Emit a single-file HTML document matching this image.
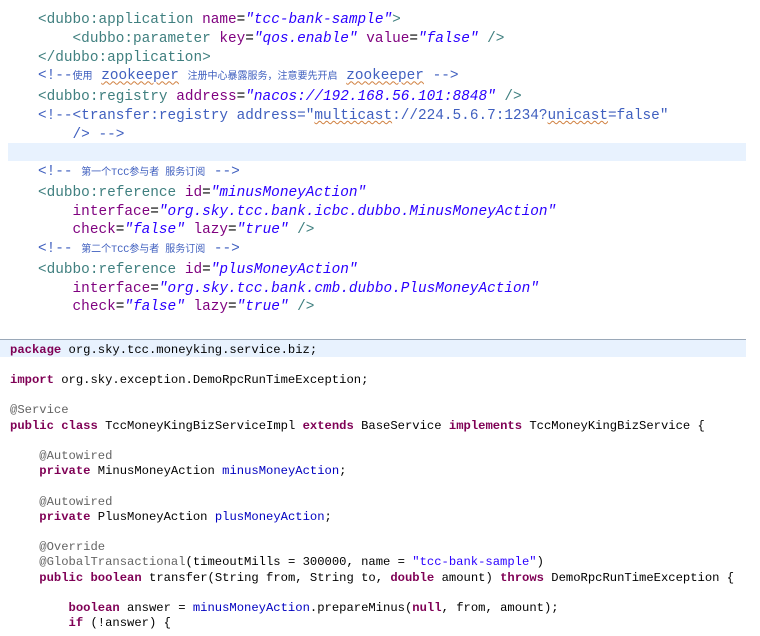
<!DOCTYPE html><html><head><meta charset="utf-8"><style>
body{margin:0;width:760px;height:636px;background:#fff;position:relative;overflow:hidden}
pre{margin:0;position:absolute;white-space:pre}
.x{left:38px;top:11px;font:14.4px/18.75px "Liberation Mono","Noto Sans CJK SC",monospace;color:#3f7f7f}
.j{left:10px;top:342.5px;font:12.2px/15.2px "Liberation Mono",monospace;color:#000}
.a{color:#7f007f}.v{color:#2a00ff;font-style:italic}.c{color:#3f5fbf}.c small{font-size:10px}
.k{color:#7f0055;font-weight:bold}.f{color:#0000c0}.n{color:#646464}.s{color:#2a00ff}
.u{text-decoration:underline wavy #d08040;text-decoration-thickness:1px}
.e{color:#000}
</style></head><body>
<div style="position:absolute;left:8px;top:143px;width:738px;height:18px;background:#e8f2fe"></div>
<div style="position:absolute;left:0;top:339px;width:746px;height:1px;background:#9aa8b8"></div>
<div style="position:absolute;left:0;top:340px;width:746px;height:17px;background:#e8f2fe"></div>
<pre class="x">&lt;dubbo:application <span class="a">name</span><span class="e">=</span><span class="v">"tcc-bank-sample"</span>&gt;
    &lt;dubbo:parameter <span class="a">key</span><span class="e">=</span><span class="v">"qos.enable"</span> <span class="a">value</span><span class="e">=</span><span class="v">"false"</span> /&gt;
&lt;/dubbo:application&gt;
<span class="c">&lt;!--<small>使用</small> <span class="u">zookeeper</span> <small>注册中心暴露服务，注意要先开启</small> <span class="u">zookeeper</span> --&gt;</span>
&lt;dubbo:registry <span class="a">address</span><span class="e">=</span><span class="v">"nacos://192.168.56.101:8848"</span> /&gt;
<span class="c">&lt;!--&lt;transfer:registry address="<span class="u">multicast</span>://224.5.6.7:1234?<span class="u">unicast</span>=false"
    /&gt; --&gt;</span>

<span class="c">&lt;!-- <small>第一个TCC参与者 服务订阅</small> --&gt;</span>
&lt;dubbo:reference <span class="a">id</span><span class="e">=</span><span class="v">"minusMoneyAction"</span>
    <span class="a">interface</span><span class="e">=</span><span class="v">"org.sky.tcc.bank.icbc.dubbo.MinusMoneyAction"</span>
    <span class="a">check</span><span class="e">=</span><span class="v">"false"</span> <span class="a">lazy</span><span class="e">=</span><span class="v">"true"</span> /&gt;
<span class="c">&lt;!-- <small>第二个TCC参与者 服务订阅</small> --&gt;</span>
&lt;dubbo:reference <span class="a">id</span><span class="e">=</span><span class="v">"plusMoneyAction"</span>
    <span class="a">interface</span><span class="e">=</span><span class="v">"org.sky.tcc.bank.cmb.dubbo.PlusMoneyAction"</span>
    <span class="a">check</span><span class="e">=</span><span class="v">"false"</span> <span class="a">lazy</span><span class="e">=</span><span class="v">"true"</span> /&gt;</pre>
<pre class="j"><span class="k">package</span> org.sky.tcc.moneyking.service.biz;

<span class="k">import</span> org.sky.exception.DemoRpcRunTimeException;

<span class="n">@Service</span>
<span class="k">public</span> <span class="k">class</span> TccMoneyKingBizServiceImpl <span class="k">extends</span> BaseService <span class="k">implements</span> TccMoneyKingBizService {

    <span class="n">@Autowired</span>
    <span class="k">private</span> MinusMoneyAction <span class="f">minusMoneyAction</span>;

    <span class="n">@Autowired</span>
    <span class="k">private</span> PlusMoneyAction <span class="f">plusMoneyAction</span>;

    <span class="n">@Override</span>
    <span class="n">@GlobalTransactional</span>(timeoutMills = 300000, name = <span class="s">"tcc-bank-sample"</span>)
    <span class="k">public</span> <span class="k">boolean</span> transfer(String from, String to, <span class="k">double</span> amount) <span class="k">throws</span> DemoRpcRunTimeException {

        <span class="k">boolean</span> answer = <span class="f">minusMoneyAction</span>.prepareMinus(<span class="k">null</span>, from, amount);
        <span class="k">if</span> (!answer) {</pre>
</body></html>
